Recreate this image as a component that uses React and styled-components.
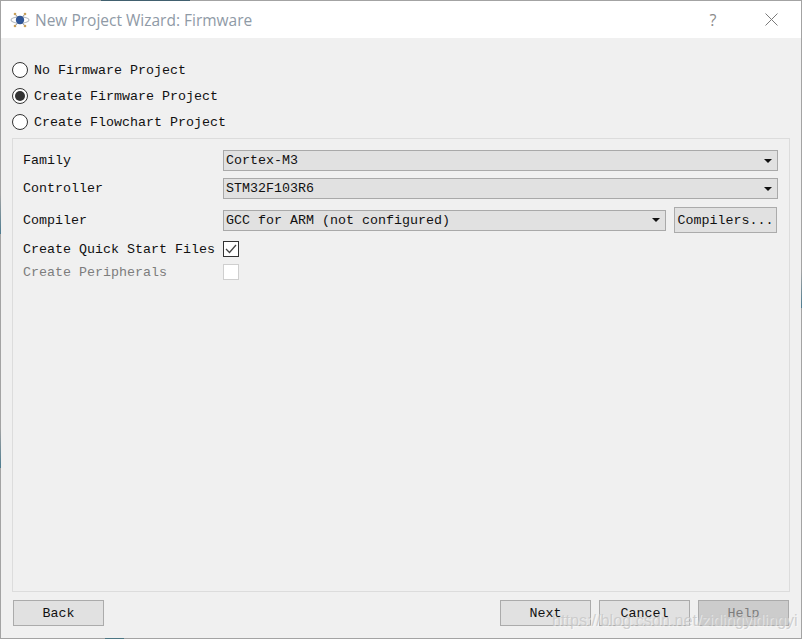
import React from "react";
import styled, { createGlobalStyle } from "styled-components";

const Global = createGlobalStyle`
  html, body {
    margin: 0;
    padding: 0;
    overflow: hidden;
  }
  * {
    box-sizing: border-box;
  }
`;

const Win = styled.div`
  position: relative;
  width: 802px;
  height: 639px;
  display: flex;
  flex-direction: column;
  border: 1px solid #a3a3a3;
  background: #f0f0f0;
  font-family: "Liberation Mono", monospace;
  font-size: 13.33px;
  color: #111;
`;

const TitleBar = styled.div`
  height: 37px;
  flex: none;
  display: flex;
  align-items: center;
  background: #fff;
  padding-left: 9px;
`;

const Title = styled.div`
  margin-left: 5px;
  flex: 1;
  font-family: "Open Sans", sans-serif;
  font-size: 15.5px;
  color: #8f9aa6;
`;

const TitleBtn = styled.div`
  width: ${(p) => p.$w}px;
  height: 100%;
  display: flex;
  align-items: center;
  justify-content: center;
  color: #8a8a8a;
  font-family: "Open Sans", sans-serif;
  font-size: 16px;
`;

const Body = styled.div`
  flex: 1;
  display: flex;
  flex-direction: column;
  padding: 19px 11px 0 11px;
`;

const RadioRow = styled.label`
  height: 26px;
  display: flex;
  align-items: center;
  gap: 6px;
`;

const RadioCircle = styled.span`
  width: 16px;
  height: 16px;
  border-radius: 50%;
  border: 1px solid #333;
  background: #fff;
  display: flex;
  align-items: center;
  justify-content: center;
  &::after {
    content: "";
    width: 10px;
    height: 10px;
    border-radius: 50%;
    background: ${(p) => (p.$on ? "#333" : "transparent")};
  }
`;

const Group = styled.div`
  margin-top: 3px;
  height: 454px;
  display: flex;
  flex-direction: column;
  gap: 7px;
  border: 1px solid #dcdcdc;
  padding: 11px 11px 0 10px;
`;

const Row = styled.div`
  display: grid;
  grid-template-columns: 200px 1fr;
  align-items: center;
  margin: ${(p) => (p.$spaced ? "1px 0" : "0")};
  color: ${(p) => (p.$off ? "#7d7d7d" : "inherit")};
`;

const Combo = styled.div`
  height: 21px;
  flex: 1;
  display: flex;
  align-items: center;
  justify-content: space-between;
  border: 1px solid #a9a9a9;
  background: #e1e1e1;
  padding: 0 5px 0 2px;
`;

const Arrow = styled.span`
  width: 0;
  height: 0;
  border-left: 4px solid transparent;
  border-right: 4px solid transparent;
  border-top: 4px solid #111;
`;

const ComboLine = styled.div`
  display: flex;
  align-items: center;
  gap: 8px;
  padding-right: 1px;
`;

const Button = styled.div`
  width: ${(p) => p.$w || 91}px;
  height: ${(p) => p.$h || 26}px;
  flex: none;
  display: flex;
  align-items: center;
  justify-content: center;
  border: 1px solid #ababab;
  background: ${(p) => (p.$off ? "#cccccc" : "#e1e1e1")};
  color: ${(p) => (p.$off ? "#7d7d7d" : "#111")};
`;

const Check = styled.span`
  width: 16px;
  height: 16px;
  display: flex;
  align-items: center;
  justify-content: center;
  background: #fff;
  border: 1px solid ${(p) => (p.$off ? "#cfcfcf" : "#333")};
`;

const Footer = styled.div`
  display: flex;
  justify-content: space-between;
  margin-top: 8px;
  padding: 0 1px;
`;

const FooterRight = styled.div`
  display: flex;
  gap: 8px;
`;

const Watermark = styled.div`
  position: absolute;
  left: 551px;
  top: 610px;
  font-family: "Liberation Sans", sans-serif;
  font-size: 16.2px;
  color: rgba(200, 200, 200, 0.85);
  text-shadow: 1px 1px 0 rgba(255, 255, 255, 0.5);
  white-space: nowrap;
`;

// bits of the desktop showing through on the window edge
const EdgeTop = styled.div`
  position: absolute;
  top: -1px;
  left: 100px;
  width: 89px;
  height: 1px;
  background: #41606f;
`;

const EdgeBottom = styled.div`
  position: absolute;
  bottom: -1px;
  left: 104px;
  width: 19px;
  height: 1px;
  background: #4d7683;
`;

const EdgeSide = styled.div`
  position: absolute;
  ${(p) => (p.$right ? "right" : "left")}: -1px;
  top: ${(p) => p.$top}px;
  width: 1px;
  height: ${(p) => p.$h}px;
  background: linear-gradient(#a3a3a3, #4d7c90);
`;

const Logo = () => (
  <svg width="20" height="18" viewBox="0 0 20 18">
    <ellipse cx="10" cy="9" rx="9" ry="3.2" fill="none" stroke="#b9bec4" strokeWidth="1.2" />
    <path d="M5 3L15 15M15 3L5 15" stroke="#8a919a" strokeWidth="1" fill="none" />
    <circle cx="5" cy="3" r="1.3" fill="#c9a15a" />
    <circle cx="15" cy="3" r="1.3" fill="#c9a15a" />
    <circle cx="5" cy="15" r="1.3" fill="#c9a15a" />
    <circle cx="15" cy="15" r="1.3" fill="#c9a15a" />
    <circle cx="10" cy="9" r="4.2" fill="#2f5596" />
  </svg>
);

const CloseIcon = () => (
  <svg width="13" height="13" viewBox="0 0 13 13">
    <path d="M0.5 0.5L12.5 12.5M12.5 0.5L0.5 12.5" stroke="#7a7a7a" strokeWidth="1" fill="none" />
  </svg>
);

const Tick = () => (
  <svg width="12" height="10" viewBox="0 0 12 10">
    <path d="M1 5L4.5 8.5L11 1" stroke="#444" strokeWidth="1.3" fill="none" />
  </svg>
);

export default function App() {
  return (
    <Win>
      <Global />
      <EdgeTop />
      <EdgeBottom />
      <EdgeSide $top={193} $h={40} />
      <EdgeSide $top={427} $h={40} />
      <EdgeSide $right $top={270} $h={37} />
      <TitleBar>
        <Logo />
        <Title>New Project Wizard: Firmware</Title>
        <TitleBtn $w={56}>?</TitleBtn>
        <TitleBtn $w={60}>
          <CloseIcon />
        </TitleBtn>
      </TitleBar>
      <Body>
        <RadioRow>
          <RadioCircle />
          No Firmware Project
        </RadioRow>
        <RadioRow>
          <RadioCircle $on />
          Create Firmware Project
        </RadioRow>
        <RadioRow>
          <RadioCircle />
          Create Flowchart Project
        </RadioRow>
        <Group>
          <Row>
            <span>Family</span>
            <Combo>
              Cortex-M3
              <Arrow />
            </Combo>
          </Row>
          <Row>
            <span>Controller</span>
            <Combo>
              STM32F103R6
              <Arrow />
            </Combo>
          </Row>
          <Row $spaced>
            <span>Compiler</span>
            <ComboLine>
              <Combo>
                GCC for ARM (not configured)
                <Arrow />
              </Combo>
              <Button $w={103}>Compilers...</Button>
            </ComboLine>
          </Row>
          <Row>
            <span>Create Quick Start Files</span>
            <Check>
              <Tick />
            </Check>
          </Row>
          <Row $off>
            <span>Create Peripherals</span>
            <Check $off />
          </Row>
        </Group>
        <Footer>
          <Button>Back</Button>
          <FooterRight>
            <Button>Next</Button>
            <Button>Cancel</Button>
            <Button $off>Help</Button>
          </FooterRight>
        </Footer>
      </Body>
      <Watermark>https://blog.csdn.net/zidingyidingyi</Watermark>
    </Win>
  );
}
